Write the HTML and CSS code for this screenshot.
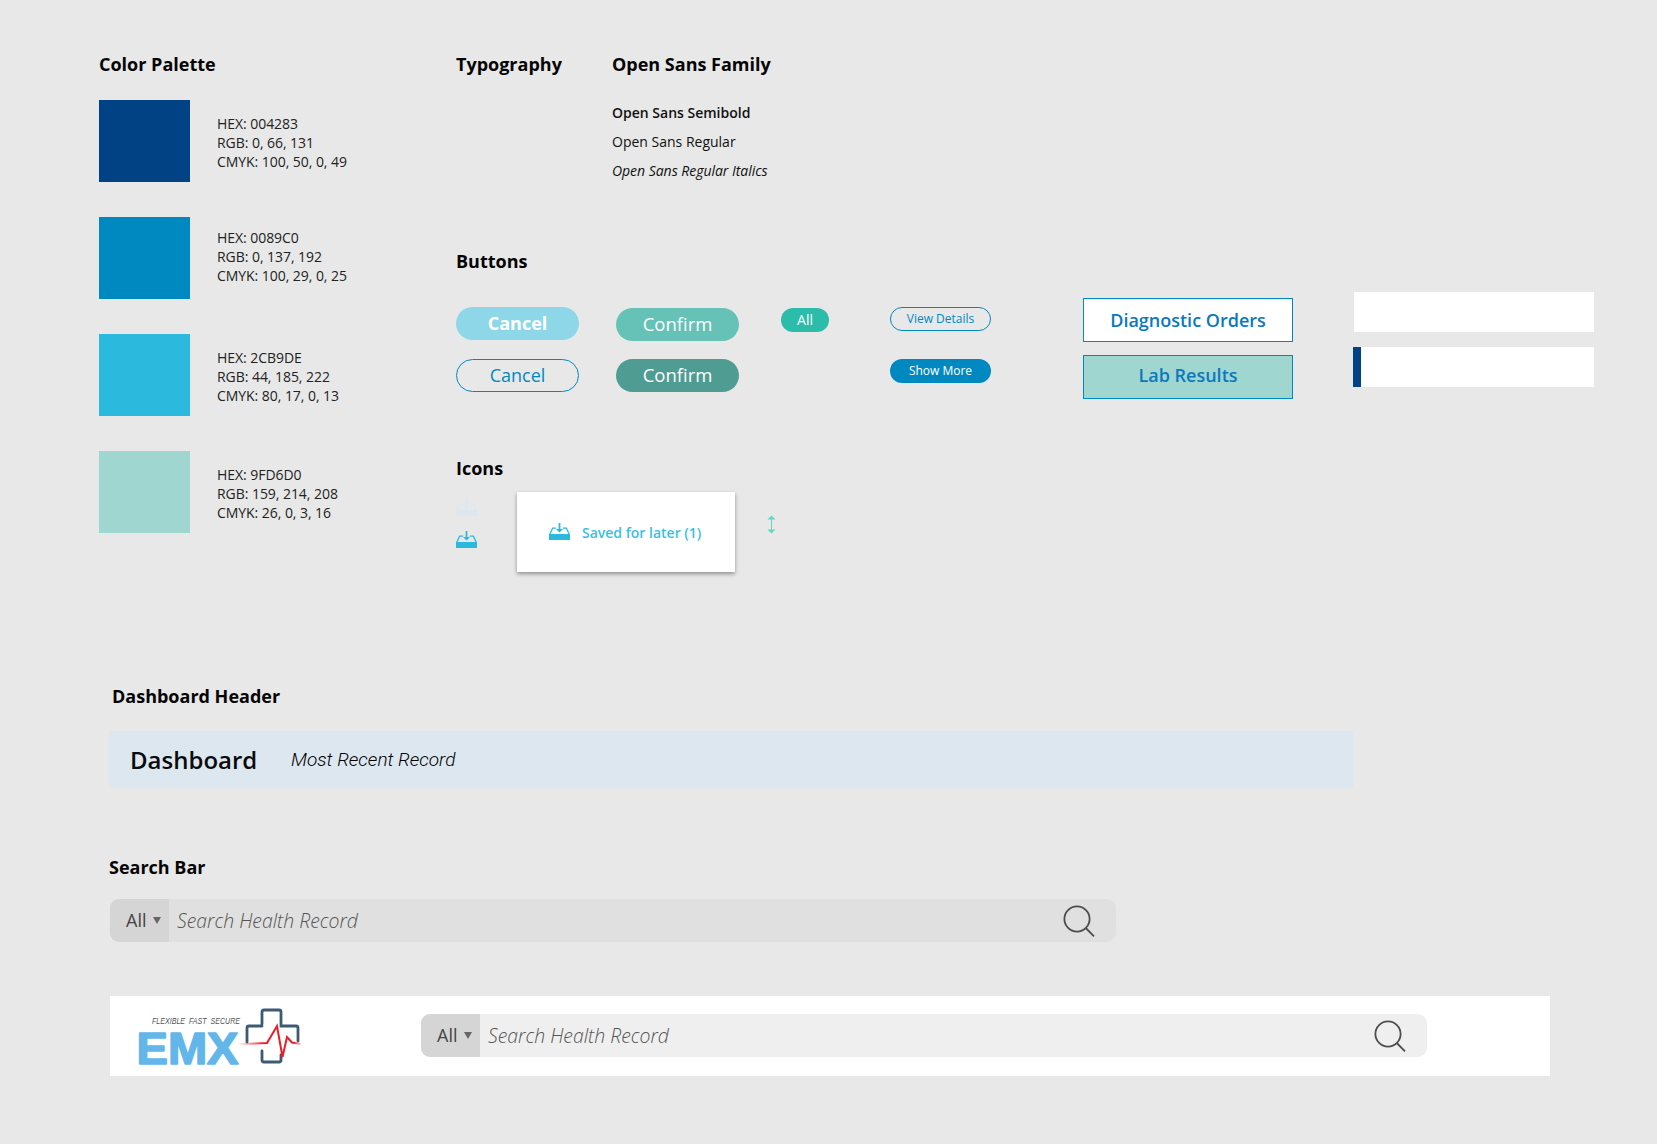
FILE: index.html
```html
<!DOCTYPE html>
<html lang="en">
<head>
<meta charset="utf-8">
<title>Style Guide</title>
<link rel="stylesheet" href="styles.css">
</head>
<body>
<svg class="defs" width="0" height="0" aria-hidden="true">
  <defs>
    <symbol id="tray" viewBox="0 0 21 17">
      <rect x="0" y="11" width="21" height="6" fill="currentColor"/>
      <path d="M0.7 11.5 L3.6 5.2 H7.2 M13.8 5.2 H17.4 L20.3 11.5" fill="none" stroke="currentColor" stroke-width="1.3"/>
      <path d="M9.6 0 H11.4 V6 H14 L10.5 9.6 L7 6 H9.6 Z" fill="currentColor"/>
    </symbol>
    <symbol id="glass" viewBox="0 0 34 34">
      <circle cx="15" cy="14" r="12.6" fill="none" stroke="#4d4d4d" stroke-width="1.8"/>
      <path d="M23.8 23 L32 31.4" fill="none" stroke="#4d4d4d" stroke-width="1.8"/>
    </symbol>
    <linearGradient id="fade" x1="103" y1="0" x2="166" y2="0" gradientUnits="userSpaceOnUse">
      <stop offset="0" stop-color="#ed1c24" stop-opacity="0"/>
      <stop offset="0.42" stop-color="#ed1c24"/>
      <stop offset="0.88" stop-color="#ed1c24"/>
      <stop offset="1" stop-color="#ed1c24" stop-opacity="0.2"/>
    </linearGradient>
  </defs>
</svg>

<div class="top">
  <section class="palette">
    <h2 class="title palette-title">Color Palette</h2>
    <div class="swatch-row">
      <div class="swatch navy"></div>
      <p class="values">HEX: 004283<br>RGB: 0, 66, 131<br>CMYK: 100, 50, 0, 49</p>
    </div>
    <div class="swatch-row">
      <div class="swatch blue"></div>
      <p class="values values-high">HEX: 0089C0<br>RGB: 0, 137, 192<br>CMYK: 100, 29, 0, 25</p>
    </div>
    <div class="swatch-row">
      <div class="swatch sky"></div>
      <p class="values">HEX: 2CB9DE<br>RGB: 44, 185, 222<br>CMYK: 80, 17, 0, 13</p>
    </div>
    <div class="swatch-row">
      <div class="swatch mint"></div>
      <p class="values">HEX: 9FD6D0<br>RGB: 159, 214, 208<br>CMYK: 26, 0, 3, 16</p>
    </div>
  </section>

  <div class="specs">
    <section class="typography">
      <h2 class="title type-title">Typography</h2>
      <div>
        <h2 class="title">Open Sans Family</h2>
        <ul class="samples">
          <li class="semibold">Open Sans Semibold</li>
          <li>Open Sans Regular</li>
          <li class="italic">Open Sans Regular Italics</li>
        </ul>
      </div>
    </section>

    <h2 class="title buttons-title">Buttons</h2>
    <section class="buttons">
      <div class="col col-cancel">
        <span class="pill pill-lg cancel-solid">Cancel</span>
        <span class="pill pill-lg cancel-outline">Cancel</span>
      </div>
      <div class="col col-confirm">
        <span class="pill pill-lg confirm-light">Confirm</span>
        <span class="pill pill-lg confirm-dark">Confirm</span>
      </div>
      <div class="col col-all">
        <span class="pill pill-all">All</span>
      </div>
      <div class="col col-small">
        <span class="pill pill-sm view-details">View Details</span>
        <span class="pill pill-sm show-more">Show More</span>
      </div>
      <div class="col col-tabs">
        <span class="tab">Diagnostic Orders</span>
        <span class="tab tab-active">Lab Results</span>
      </div>
      <div class="col col-boxes">
        <div class="box"></div>
        <div class="box box-accent"></div>
      </div>
    </section>

    <h2 class="title icons-title">Icons</h2>
    <section class="icons">
      <div class="tray-stack">
        <svg class="tray tray-pale"><use href="#tray"/></svg>
        <svg class="tray tray-sky"><use href="#tray"/></svg>
      </div>
      <div class="saved-card">
        <svg class="tray tray-sky tray-lifted"><use href="#tray"/></svg>
        <span>Saved for later (1)</span>
      </div>
      <svg class="resize" viewBox="0 0 10 20">
        <path d="M5 0 L9.5 4.5 H0.5 Z M5 20 L9.5 15.5 H0.5 Z" fill="#67d6c4"/>
        <path d="M5 3 V17" stroke="#67d6c4" stroke-width="1.2"/>
      </svg>
    </section>
  </div>
</div>

<section class="dashboard-section">
  <h2 class="title dash-title">Dashboard Header</h2>
  <div class="dash-band">
    <span class="dash-name">Dashboard</span>
    <span class="dash-sub">Most Recent Record</span>
  </div>
</section>

<section class="search-section">
  <h2 class="title">Search Bar</h2>
  <div class="search">
    <div class="search-scope">All<span class="caret"></span></div>
    <div class="search-text">Search Health Record</div>
    <svg class="glass"><use href="#glass"/></svg>
  </div>
</section>

<header class="appbar">
  <svg class="logo" viewBox="0 -8 170 80" role="img" aria-label="EMX logo">
    <text class="logo-tag" x="17" y="20" textLength="88" lengthAdjust="spacingAndGlyphs">FLEXIBLE  FAST  SECURE</text>
    <text class="logo-mark" x="1.5" y="59.5" textLength="102" lengthAdjust="spacingAndGlyphs">EMX</text>
    <path d="M127 20 V8 Q127 6 129 6 H144 Q146 6 146 8 V22 H161 Q163 22 163 24 V37 M127 22 H114 Q112 22 112 24 V38 M127 47 V56 Q127 58 129 58 H144 Q146 58 146 56 V51" fill="none" stroke="#3c5a74" stroke-width="2.8" stroke-linecap="round"/>
    <path d="M103 40 L132 39 L142 22 L147.5 53 L152 33 L157 38.5 L166 40" fill="none" stroke="url(#fade)" stroke-width="2" stroke-linejoin="miter"/>
  </svg>
  <div class="search search-light">
    <div class="search-scope">All<span class="caret"></span></div>
    <div class="search-text">Search Health Record</div>
    <svg class="glass"><use href="#glass"/></svg>
  </div>
</header>
</body>
</html>
```
FILE: styles.css
```css
* { box-sizing: border-box; }

html, body { margin: 0; padding: 0; }

body {
  width: 1657px;
  height: 1144px;
  overflow: hidden;
  background: #e8e8e8;
  color: #111;
  font-family: "Open Sans", "Liberation Sans", sans-serif;
  font-size: 14px;
}

.defs { position: absolute; }

.title {
  margin: 0;
  font-size: 18px;
  line-height: 24px;
  font-weight: 700;
  color: #050505;
}

/* Top area */
.top {
  display: flex;
  padding: 52px 0 0 99px;
}

.palette { width: 357px; }
.palette-title { margin-bottom: 24px; }

.swatch-row {
  display: flex;
  height: 82px;
  margin-bottom: 35px;
}
.swatch-row:last-child { margin-bottom: 0; }

.swatch { width: 91px; height: 82px; }
.navy { background: #004283; }
.blue { background: #0089c0; }
.sky { background: #2cb9de; }
.mint { background: #9fd6d0; }

.values {
  margin: 0 0 0 27px;
  padding-top: 14px;
  line-height: 19px;
  letter-spacing: -0.05px;
  color: #222;
}
.values-high { padding-top: 11px; }

/* Typography */
.typography { display: flex; height: 197px; }
.type-title { width: 156px; }

.samples {
  list-style: none;
  margin: 22px 0 0;
  padding: 0;
  line-height: 29px;
  color: #111;
}
.semibold { font-weight: 600; }
.italic { font-style: italic; letter-spacing: -0.03px; }

/* Buttons */
.buttons-title { margin-bottom: 19px; }

.buttons { display: flex; height: 164px; }

.col { display: flex; flex-direction: column; }
.col-cancel { width: 123px; padding-top: 15px; gap: 19px; }
.col-confirm { width: 123px; margin-left: 37px; padding-top: 16px; gap: 18px; }
.col-all { width: 48px; margin-left: 42px; padding-top: 16px; }
.col-small { width: 101px; margin-left: 61px; padding-top: 15px; gap: 28px; }
.col-tabs { width: 210px; margin-left: 92px; padding-top: 6px; gap: 13px; }
.col-boxes { width: 241px; margin-left: 60px; gap: 15px; }

.pill {
  display: flex;
  align-items: center;
  justify-content: center;
  padding-bottom: 2px;
  border-radius: 17px;
}
.pill-lg { height: 33px; font-size: 18.5px; }
.cancel-solid { background: #8dd7e8; color: #fff; font-weight: 700; font-size: 18px; }
.cancel-outline { border: 1px solid #0089c0; color: #0089c0; font-size: 18px; }
.confirm-light { background: #66c2b6; color: #fff; }
.confirm-dark { background: #4f9c92; color: #fff; }

.pill-all {
  height: 24px;
  background: #2cbcaa;
  color: #fff;
  font-size: 14px;
  border-radius: 12px;
}

.pill-sm { height: 24px; font-size: 12px; border-radius: 12px; }
.view-details { border: 1px solid #0089c0; color: #0089c0; }
.show-more { background: #0089c0; color: #fff; }

.tab {
  display: flex;
  align-items: center;
  justify-content: center;
  height: 44px;
  border: 1px solid #0089c0;
  background: #fff;
  color: #0a79bd;
  font-size: 18px;
  font-weight: 600;
}
.tab-active { background: #9fd6d0; padding-bottom: 5px; }

.box {
  height: 40px;
  margin-left: 1px;
  background: #fff;
}
.box-accent {
  margin-left: 0;
  border-left: 8px solid #004283;
}

/* Icons */
.icons-title { margin-bottom: 12px; }

.icons { display: flex; }

.tray { display: block; width: 21px; height: 17px; }
.tray-pale { color: #dde7f0; }
.tray-sky { color: #2cb9de; }
.tray-lifted { margin-top: -2px; }

.tray-stack {
  width: 61px;
  padding-top: 7px;
  display: flex;
  flex-direction: column;
  gap: 15px;
}

.saved-card {
  display: flex;
  align-items: center;
  gap: 12px;
  width: 218px;
  height: 80px;
  padding-left: 32px;
  background: #fff;
  box-shadow: 0 2px 4px rgba(0, 0, 0, 0.38);
  color: #3abfe1;
  font-size: 14px;
  font-weight: 600;
}

.resize {
  width: 9px;
  height: 21px;
  margin: 22px 0 0 32px;
}

/* Dashboard */
.dashboard-section { margin: 112px 0 0 109px; }
.dash-title { padding-left: 3px; margin-bottom: 23px; }

.dash-band {
  display: flex;
  align-items: center;
  width: 1244px;
  height: 57px;
  padding: 0 0 1px 21px;
  background: #dde7f0;
}
.dash-name { width: 161px; font-size: 24px; font-weight: 600; color: #0b0b0b; }
.dash-sub {
  padding-top: 1px;
  font-family: Roboto, "Liberation Sans", sans-serif;
  font-size: 19px;
  font-style: italic;
  font-weight: 300;
  color: #000;
}

/* Search */
.search-section { margin: 67px 0 0 109px; }
.search-section .title { margin-bottom: 20px; }

.search {
  display: flex;
  align-items: center;
  width: 1006px;
  height: 43px;
  margin-left: 1px;
  border-radius: 9px;
  overflow: hidden;
  background: #e0e0e0;
}
.search-scope {
  display: flex;
  align-items: center;
  width: 59px;
  height: 100%;
  padding: 0 0 2px 16px;
  background: #d5d5d5;
  color: #444;
  font-size: 18px;
}
.caret {
  width: 0;
  height: 0;
  margin: 2px 0 0 7px;
  border-left: 4px solid transparent;
  border-right: 4px solid transparent;
  border-top: 7px solid #666;
}
.search-text {
  flex: 1;
  padding-left: 8px;
  color: #555;
  font-size: 19.4px;
  font-style: italic;
  font-weight: 300;
}
.glass {
  width: 34px;
  height: 34px;
  margin: 2px 20px 0 0;
}

/* App bar */
.appbar {
  display: flex;
  align-items: flex-start;
  width: 1440px;
  height: 80px;
  margin: 54px 0 0 110px;
  padding: 18px 0 0 25px;
  background: #fff;
}
.logo {
  display: block;
  width: 170px;
  height: 80px;
  margin-top: -18px;
}
.logo-tag {
  font-family: "Liberation Sans", Arial, sans-serif;
  font-size: 8.6px;
  font-style: italic;
  fill: #555;
  white-space: pre;
}
.logo-mark {
  font-family: "Liberation Sans", Arial, sans-serif;
  font-size: 45px;
  font-weight: 700;
  fill: #63b6ea;
  stroke: #63b6ea;
  stroke-width: 1.6;
  stroke-linejoin: round;
}
.search-light {
  margin-left: 116px;
  background: #efefef;
}
```
